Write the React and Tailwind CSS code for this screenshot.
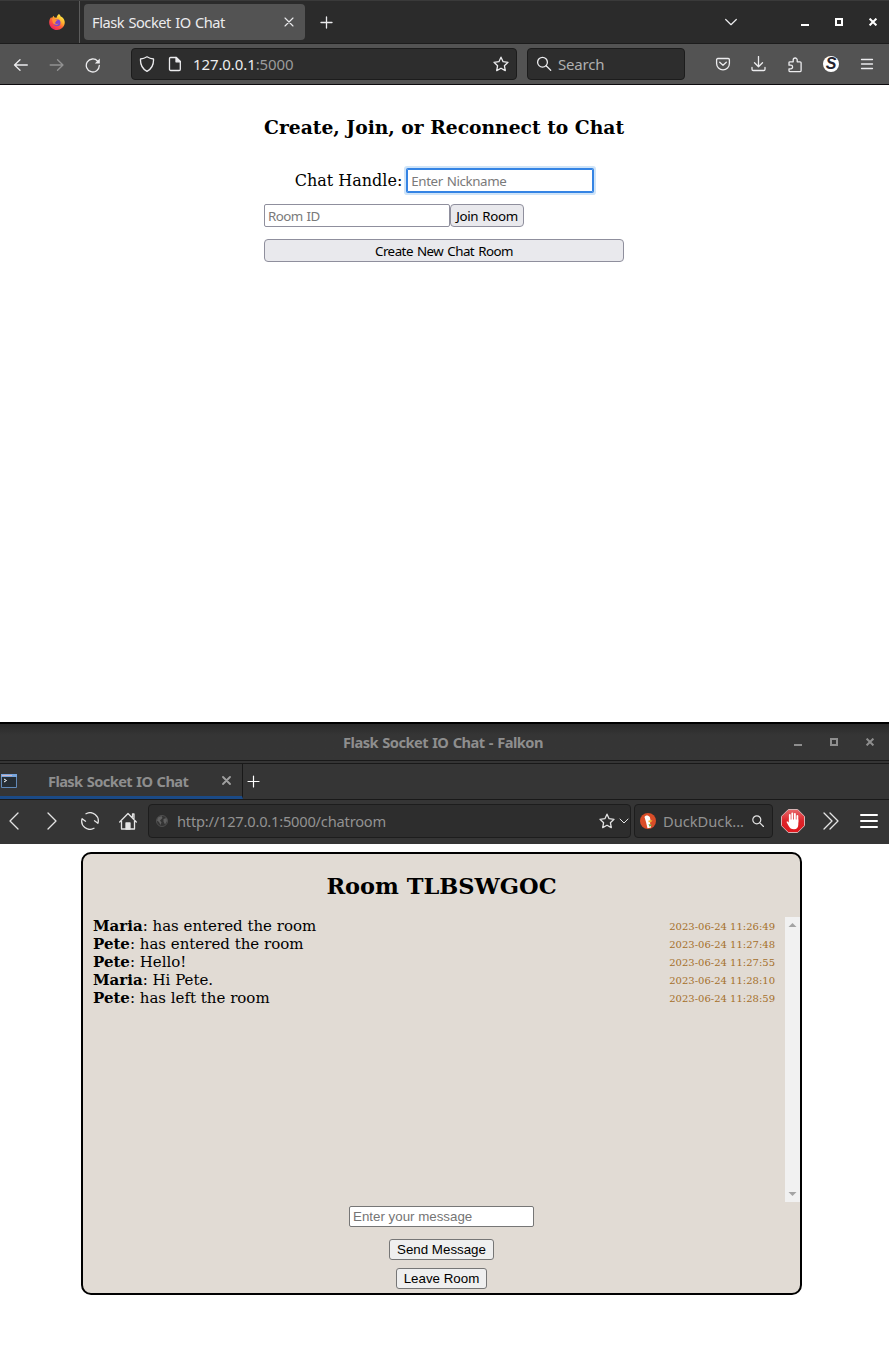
import React from "react";

function Icon({ className = "", w = 16, h = 16, sw = 1.3, children }) {
  return (
    <svg
      width={w}
      height={h}
      viewBox={`0 0 ${w} ${h}`}
      fill="none"
      stroke="currentColor"
      strokeWidth={sw}
      strokeLinecap="round"
      strokeLinejoin="round"
      className={"shrink-0 " + className}
    >
      {children}
    </svg>
  );
}

function FirefoxLogo({ className }) {
  return (
    <svg width="16" height="16" viewBox="0 0 16 16" className={"shrink-0 " + className}>
      <defs>
        <linearGradient id="fx" x1="0.85" y1="0.1" x2="0.25" y2="0.95">
          <stop offset="0" stopColor="#fff14a" />
          <stop offset="0.35" stopColor="#ffb02e" />
          <stop offset="0.6" stopColor="#ff6038" />
          <stop offset="1" stopColor="#f0225f" />
        </linearGradient>
      </defs>
      <path d="M10 0c1 1 1.500 1.800 1.700 2.600 1 .2 2 .9 2.700 2C15.300 6 16 7.500 15.700 9.300 15.100 13.200 12 16 8 16S.3 12.800.2 8.700C.1 6.500.9 4.500 2.300 3c.1.700.3 1 .6 1.200C3.500 3 4 2.200 4.800 1.800c0 .8.300 1.500.8 1.800l2 .1C7.700 2.500 8.600.900 10 0Z" fill="url(#fx)" />
      <circle cx="8" cy="8.700" r="3.500" fill="#8045cf" />
      <path d="M2.900 5.300c1.300-.8 2.800-.7 4 .2h2c-.2.900-1.100 1.200-1.900 1.500.1 1-.4 1.400-1.300 1.700.8 1.600 3.300 1.700 4 .5C8.700 11.700 4 11 3.600 8Z" fill="#ff9132" />
    </svg>
  );
}

function WindowButtons({ className, gap }) {
  return (
    <div className={"flex items-center " + gap + " " + className}>
      <svg width="8" height="8" viewBox="0 0 8 8" fill="currentColor"><path d="M0 6h8v2H0z" /></svg>
      <svg width="8" height="8" viewBox="0 0 8 8" fill="none" stroke="currentColor" strokeWidth="2"><path d="M1 1h6v6H1z" /></svg>
      <svg width="8" height="8" viewBox="0 0 8 8" fill="none" stroke="currentColor" strokeWidth="2"><path d="M.6.6l6.800 6.800M7.400.6L.6 7.400" /></svg>
    </div>
  );
}

const STAR = "M8 1.200l2.100 4.500 4.900.6-3.600 3.400.9 4.900L8 12.200l-4.300 2.400.9-4.900L1 6.300l4.900-.6z";

function FirefoxChrome() {
  return (
    <header className="h-[85px] font-['Noto_Sans',sans-serif] text-[#ececee]">
      <div className="flex h-11 border-t border-[#3a3a3a] border-b border-b-[#1d1d1d] bg-[#2b2b2b]">
        <div className="flex w-20 shrink-0 items-center border-r border-[#5c5c5c]">
          <FirefoxLogo className="ml-[49px]" />
        </div>
        <div className="mt-[3px] ml-1 flex h-9 w-[221px] shrink-0 items-center rounded bg-[#535353] pl-2">
          <span className="w-[133px] text-[14.667px] tracking-[-0.48px] whitespace-nowrap [word-spacing:1px]">Flask Socket IO Chat</span>
          <Icon w={10} h={10} sw={1.100} className="ml-[59px]"><path d="M1 1l8 8M9 1L1 9" /></Icon>
        </div>
        <div className="flex flex-1 items-center">
          <Icon w={13} h={13} className="ml-[15px]"><path d="M6.500 1v11M1 6.500h11" /></Icon>
          <Icon w={12} h={8} sw={1.200} className="ml-auto"><path d="M.7 1.500L6 6.700l5.300-5.200" /></Icon>
          <WindowButtons className="ml-[64px] mr-[12px] text-white" gap="gap-[26px]" />
        </div>
      </div>
      <div className="flex h-[41px] items-center border-b border-[#0c0a0d] bg-[#535353]">
        <Icon className="mt-px ml-[13px]"><path d="M14.300 8H1.500M7 2.800L1.500 8 7 13.200" /></Icon>
        <Icon className="mt-px ml-5 text-[#929292]"><path d="M1.200 8h12.800M8.500 2.800L14 8l-5.500 5.200" /></Icon>
        <Icon className="mt-px ml-5"><path d="M14.300 8.500A6.500 6.500 0 1 1 12.700 4.200" /><path d="M14.800 1.500v5H9.800z" fill="currentColor" stroke="none" /></Icon>
        <div className="ml-[30px] flex h-8 w-[386px] shrink-0 items-center rounded border border-[#1c1c1c] bg-[#2d2d2d]">
          <Icon className="ml-[7px]"><path d="M8 .8c2.200 1.400 4.500 2 6.500 2.200.3 5.300-1.600 9.800-6.500 12.300C3.100 12.800 1.200 8.300 1.500 3 3.500 2.800 5.800 2.200 8 .8z" /></Icon>
          <Icon className="ml-3"><path d="M3.500 1.500h5.800l4 4v7.800a1.200 1.200 0 0 1-1.200 1.200H3.700a1.200 1.200 0 0 1-1.200-1.200V2.500a1 1 0 0 1 1-1z" /><path d="M9 1.500v4.300h4.300z" fill="currentColor" /></Icon>
          <span className="mt-px ml-[10px] text-[15px] tracking-[-0.1px] whitespace-nowrap">127.0.0.1<span className="text-[#9b9b9b]">:5000</span></span>
          <Icon className="ml-auto mr-[7px]"><path d={STAR} /></Icon>
        </div>
        <div className="ml-[10px] flex h-8 w-[158px] shrink-0 items-center rounded border border-[#1c1c1c] bg-[#2d2d2d]">
          <Icon className="ml-2"><circle cx="6.500" cy="6.200" r="4.900" /><path d="M10.200 9.800l4.500 4.400" /></Icon>
          <span className="mt-px ml-[6px] text-[15px] tracking-[-0.2px] text-[#b0b0b0]">Search</span>
        </div>
        <Icon className="ml-[30px]"><path d="M2.800 2.500h10.400c.7 0 1.200.5 1.200 1.200V7.500a6.400 6.400 0 0 1-12.800 0V3.700c0-.7.500-1.200 1.200-1.200z" /><path d="M4.700 6.300L8 9.300l3.300-3" /></Icon>
        <Icon className="ml-5"><path d="M7.500.5v10M3.500 6.700l4 4 4-4M1 11.500v1.700c0 .8.500 1.300 1.300 1.300h10.400c.8 0 1.300-.5 1.300-1.300v-1.700" /></Icon>
        <Icon className="mt-px ml-5"><path d="M3.200 14.700h9.600c.8 0 1.300-.5 1.300-1.200V5.800c0-.6-.5-1-1.100-1h-2.800V3a2 2 0 0 0-4 0v1.800H3.100c-.7 0-1.100.4-1.100 1v2.400h1.800a1.800 1.800 0 0 1 0 3.600H2v1.700c0 .7.500 1.200 1.200 1.200z" /></Icon>
        <span className="ml-[20px] flex size-4 shrink-0 items-center justify-center rounded-full bg-white font-['Liberation_Sans',sans-serif] text-[16px] leading-4 font-bold text-[#25232e] italic">S</span>
        <Icon className="ml-5"><path d="M2.500 3.500h11M2.500 8h11M2.500 12.500h11" /></Icon>
      </div>
    </header>
  );
}

function JoinPage() {
  const field = "rounded-[2px] border border-[#8f8f9d] bg-white px-[3px] text-[#7a7a7a]";
  const button = "rounded-[4px] border border-[#8f8f9d] bg-[#e9e9ed] text-black";
  return (
    <main className="flex h-[637px] flex-col items-center bg-white pr-px font-['DejaVu_Serif',serif] text-black">
      <div className="w-[360px]">
        <h3 className="mt-[31px] text-[18.720px] leading-[22px] font-bold whitespace-nowrap">Create, Join, or Reconnect to Chat</h3>
        <div className="mt-[31px] flex h-[23px] items-center justify-center">
          <span className="text-[16px] whitespace-nowrap">Chat Handle:</span>
          <div className="ml-[5px] h-[23px] w-[186px] rounded-[1px] bg-white px-1 font-['Noto_Sans',sans-serif] text-[13.333px] leading-[24px] tracking-[-0.41px] text-[#7a7a7a] shadow-[0_0_0_1px_#3584e4,inset_0_0_0_1px_#3584e4,0_0_0_3px_#cfe4f8] [word-spacing:1px]">Enter Nickname</div>
        </div>
        <div className="mt-3 flex font-['Noto_Sans',sans-serif] text-[13.333px] leading-[22px] [word-spacing:1px]">
          <div className={"h-[23px] w-[186px] tracking-[-0.55px] " + field}>Room ID</div>
          <div className={"h-[23px] w-[74px] text-center tracking-[-0.36px] whitespace-nowrap " + button}>Join Room</div>
        </div>
        <div className={"mt-3 h-[23px] text-center font-['Noto_Sans',sans-serif] text-[13.333px] leading-[22px] tracking-[-0.5px] [word-spacing:1px] " + button}>Create New Chat Room</div>
      </div>
    </main>
  );
}

function FalkonChrome() {
  return (
    <header className="h-[122px] bg-[#353535] font-['Noto_Sans',sans-serif] text-[#e4e4e4]">
      <div className="grid h-[39px] grid-cols-[1fr_auto_1fr] items-center border-t-2 border-b border-t-black border-b-[#191919] bg-linear-to-b from-[#292929] to-[#353535] to-30% text-[#8e8e8e]">
        <span />
        <span className="mr-[3px] mb-px text-[14.667px] font-bold tracking-[-0.55px] whitespace-nowrap [word-spacing:1px]">Flask Socket IO Chat - Falkon</span>
        <WindowButtons className="mr-[15px] justify-self-end" gap="gap-[28px]" />
      </div>
      <div className="mt-[2px] flex h-[37px] border-t border-b border-[#191919]">
        <div className="flex w-[243px] shrink-0 items-center border-r border-b-[3px] border-r-[#191919] border-b-[#1b4a86]">
          <svg width="16" height="14" viewBox="0 0 16 14" className="mt-px ml-[1px] shrink-0">
            <path d="M.5.500h15v13H.5z" fill="#252d34" stroke="#628ab8" />
            <path d="M0 0h16v3H0z" fill="#78a5dc" />
            <path d="M1 1h10v1H1z" fill="#d3b6c4" />
            <path d="M3 5l2.500 1.500L3 8" fill="none" stroke="#fff" />
          </svg>
          <span className="mt-px ml-[31px] w-[141px] text-[14.667px] font-bold tracking-[-0.61px] whitespace-nowrap text-[#8e8e8e] [word-spacing:1px]">Flask Socket IO Chat</span>
          <Icon w={9} h={9} sw={1.800} className="mt-px ml-[33px] text-[#a0a0a0]"><path d="M1 1l7 7M8 1L1 8" /></Icon>
        </div>
        <Icon w={13} h={13} sw={1.200} className="mt-[11px] ml-[4px] text-white"><path d="M6.500 1v11M1 6.500h11" /></Icon>
      </div>
      <div className="flex h-[42px] items-center">
        <Icon w={10} h={18} className="ml-[9px]"><path d="M9 1L1 9l8 8" /></Icon>
        <Icon w={10} h={18} className="ml-[28px]"><path d="M1 1l8 8-8 8" /></Icon>
        <Icon w={18} h={18} className="ml-[24px]"><path d="M5 1.800A8.200 8.200 0 0 1 16.900 11.300L13.500 8.800M13 16.200A8.200 8.200 0 0 1 1.100 6.700L4.500 9.200" /></Icon>
        <Icon w={18} h={18} className="ml-[20px]"><path d="M.7 10L9 1.500 17.300 10M2.500 9v8h13V9M13.500 5V2h1.500v4.500" /><path d="M7 11h4v6H7z" fill="currentColor" /></Icon>
        <div className="ml-[11px] flex h-[34px] w-[483px] shrink-0 items-center rounded border border-[#1d1d1d] bg-[#2d2d2d]">
          <svg width="12" height="12" viewBox="0 0 12 12" className="ml-[7px]"><circle cx="6" cy="6" r="5.500" fill="#343434" stroke="#505050" /><path d="M2 2.500L5.500 1l1 2L4 5.500l1.500 2L4.500 10 3 7 1 5.500zM7.500 4l3-1 .5 3-2 3.500-1.500-3z" fill="#606060" /></svg>
          <span className="mb-px ml-[9px] text-[14.667px] tracking-[-0.21px] whitespace-nowrap text-[#929292]">http://127.0.0.1:5000/chatroom</span>
          <Icon className="ml-auto"><path d={STAR} /></Icon>
          <Icon w={10} h={6} sw={1} className="ml-[4px] mr-px"><path d="M1 1l4 4 4-4" /></Icon>
        </div>
        <div className="ml-[3px] flex h-[34px] w-[139px] shrink-0 items-center rounded border border-[#1d1d1d] bg-[#2d2d2d]">
          <svg width="16" height="16" viewBox="0 0 16 16" className="ml-[5px] shrink-0">
            <circle cx="8" cy="8" r="8" fill="#d94d28" />
            <path d="M4.500 4C5 2 8.500 1.800 9.800 4l.7 3-.5 3 1 4.500-3.500.8L6 9z" fill="#fff" />
            <path d="M8.500 7.500l4-.3-1.500 2H8.500z" fill="#f5b82e" />
            <path d="M8.500 11l3.500 1-2.500 1.800z" fill="#65b43d" />
          </svg>
          <span className="mb-px ml-[7px] text-[14.667px] whitespace-nowrap text-[#929292]">DuckDuck...</span>
          <Icon w={12} h={12} sw={1.200} className="ml-auto mr-2"><circle cx="4.800" cy="4.800" r="4" /><path d="M7.800 7.800l3.700 3.700" /></Icon>
        </div>
        <svg width="24" height="24" viewBox="0 0 24 24" className="ml-2 shrink-0">
          <defs>
            <linearGradient id="stop" x1="0" y1="0" x2="0" y2="1">
              <stop offset="0" stopColor="#e8696b" />
              <stop offset="0.5" stopColor="#dc2329" />
              <stop offset="1" stopColor="#e0191f" />
            </linearGradient>
          </defs>
          <path d="M7.300.5h9.400l6.800 6.800v9.400l-6.800 6.800H7.300L.5 16.700V7.300z" fill="url(#stop)" stroke="#d8b4b4" />
          <path d="M8.800 13V6M11.300 11V4.300M13.900 11V4.800M16.400 13V7" stroke="#fff" strokeWidth="1.800" strokeLinecap="round" />
          <path d="M7.900 10.500h9.400v5c0 2.700-1.500 4.800-4.300 4.800s-4.300-1.300-5.300-3.300l-2.200-4c.8-1 1.900-.3 2.400.7z" fill="#fff" />
        </svg>
        <Icon w={16} h={18} className="ml-[18px]"><path d="M1 1l8 8-8 8M7 1l8 8-8 8" /></Icon>
        <Icon w={18} h={14} sw={2} className="ml-[21px] text-white"><path d="M1 1h16M1 7h16M1 13h16" /></Icon>
      </div>
    </header>
  );
}

const MESSAGES = [
  ["Maria", "has entered the room", "2023-06-24 11:26:49"],
  ["Pete", "has entered the room", "2023-06-24 11:27:48"],
  ["Pete", "Hello!", "2023-06-24 11:27:55"],
  ["Maria", "Hi Pete.", "2023-06-24 11:28:10"],
  ["Pete", "has left the room", "2023-06-24 11:28:59"],
];

function ChatRoom() {
  const button = "h-[21px] rounded-[3px] border border-[#767676] bg-[#efefef] text-center leading-[19px] text-black";
  return (
    <main className="h-[525px] bg-white pt-2 font-['DejaVu_Serif',serif] text-black">
      <section className="ml-[81px] flex h-[443px] w-[721px] flex-col rounded-[10px] border-2 border-black bg-[#e1dbd4]">
        <h2 className="mt-[19px] text-center text-[22.500px] leading-[26px] font-bold">Room TLBSWGOC</h2>
        <div className="mt-[18px] flex h-[285px] shrink-0">
          <ul className="flex-1 pr-[10px] pl-[10px]">
            {MESSAGES.map(([name, text, time]) => (
              <li key={time} className="flex h-[18px] items-center justify-between text-[15px] leading-[18px]">
                <span><strong>{name}</strong>: {text}</span>
                <span className="pt-[2px] text-[10px] text-[#a5702a]">{time}</span>
              </li>
            ))}
          </ul>
          <div className="flex w-[15px] flex-col items-center justify-between bg-[#f1f1f1] py-[6px]">
            <svg width="9" height="4" viewBox="0 0 9 4"><path d="M.5 4l4-4 4 4z" fill="#a3a3a3" /></svg>
            <svg width="9" height="4" viewBox="0 0 9 4"><path d="M.5 0l4 4 4-4z" fill="#a3a3a3" /></svg>
          </div>
        </div>
        <div className="mt-1 flex flex-col items-center font-['Liberation_Sans',sans-serif] text-[13.333px]">
          <div className="h-[21px] w-[185px] rounded-[2px] border border-[#767676] bg-white px-[3px] leading-[19px] text-[#757575]">Enter your message</div>
          <div className={"mt-3 w-[105px] " + button}>Send Message</div>
          <div className={"mt-2 w-[91px] " + button}>Leave Room</div>
        </div>
      </section>
    </main>
  );
}

export default function App() {
  return (
    <div className="h-[1369px] w-[889px] overflow-hidden bg-white">
      <FirefoxChrome />
      <JoinPage />
      <FalkonChrome />
      <ChatRoom />
    </div>
  );
}
